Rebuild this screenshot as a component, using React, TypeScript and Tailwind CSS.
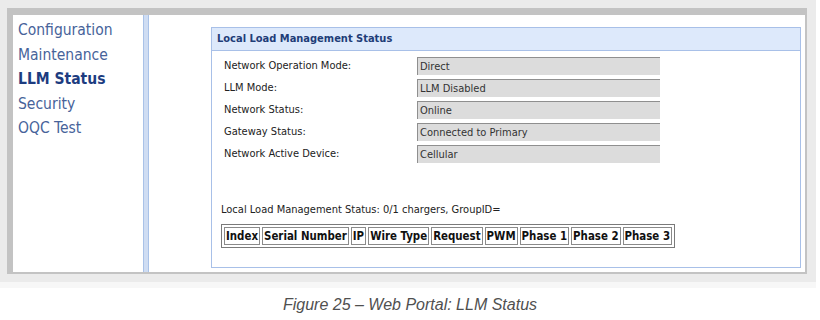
import React from "react"

const menu = [
  { label: "Configuration", active: false },
  { label: "Maintenance", active: false },
  { label: "LLM Status", active: true },
  { label: "Security", active: false },
  { label: "OQC Test", active: false },
]

const fields = [
  ["Network Operation Mode:", "Direct"],
  ["LLM Mode:", "LLM Disabled"],
  ["Network Status:", "Online"],
  ["Gateway Status:", "Connected to Primary"],
  ["Network Active Device:", "Cellular"],
]

const columns = ["Index", "Serial Number", "IP", "Wire Type", "Request", "PWM", "Phase 1", "Phase 2", "Phase 3"]

export default function App() {
  return (
    <div className="w-[820px] h-[320px] bg-white overflow-hidden font-['DejaVu_Sans_Condensed','DejaVu_Sans',sans-serif]">
      {/* screenshot frame */}
      <div className="w-[816px] bg-[#ebebeb] pt-[8px] pl-[7px] pr-[9px] pb-[8px]">
        <div className="flex h-[266px] border-t-[7px] border-l-[6px] border-r-2 border-b-2 border-[#c3c3c3] bg-white">
          {/* left menu */}
          <div className="w-[130px] shrink-0 pt-[3px] pl-[5px]">
            {menu.map((m) => (
              <div
                key={m.label}
                className={
                  m.active
                    ? "text-[15.5px] leading-[24.5px] font-bold text-[#1d3c80]"
                    : "text-[15.5px] leading-[24.5px] text-[#47639a]"
                }
              >
                {m.label}
              </div>
            ))}
          </div>
          <div className="w-[6px] shrink-0 border-x border-[#a9c2e8] bg-[#cfddf3]" />

          {/* main */}
          <div className="flex-1 pl-[62px] pt-[12px] pr-[4px] pb-[4px]">
            <div className="h-full border border-[#a8c0e8] flex flex-col">
              <div className="h-[23px] border-b border-[#a8c0e8] bg-[#dde9fb] pl-[5px] text-[11px] leading-[22px] font-bold text-[#1f3d78]">
                Local Load Management Status
              </div>
              <div className="pt-[6px] pl-[12px] flex flex-col gap-[4px]">
                {fields.map(([label, value]) => (
                  <div key={label} className="flex items-center h-[18px]">
                    <div className="w-[193px] text-[11px] text-[#222]">{label}</div>
                    <div className="w-[243px] h-[18px] bg-[#dcdcdc] border-t border-l border-[#8f8f8f] pl-[2px] text-[11px] leading-[17px] text-[#333]">
                      {value}
                    </div>
                  </div>
                ))}
              </div>
              <div className="mt-[40px] pl-[9px] text-[11px] leading-[14px] text-[#222]">
                Local Load Management Status: 0/1 chargers, GroupID=
              </div>
              <div className="mt-[7px] pl-[9px]">
                <table className="border-separate border-spacing-[2px] border border-[#7a7a7a]">
                  <thead>
                    <tr>
                      {columns.map((c) => (
                        <th
                          key={c}
                          className="border border-[#8a8a8a] px-[1px] text-[11.4px] leading-[16px] font-bold text-[#111] text-left"
                        >
                          {c}
                        </th>
                      ))}
                    </tr>
                  </thead>
                </table>
              </div>
            </div>
          </div>
        </div>
      </div>
      <div className="w-[816px] h-[6px] bg-[#f7f7f7]" />
      <div className="mt-[7px] text-center text-[16px] leading-[20px] italic text-[#505050] font-['Liberation_Sans',sans-serif]">
        Figure 25 – Web Portal: LLM Status
      </div>
    </div>
  )
}
